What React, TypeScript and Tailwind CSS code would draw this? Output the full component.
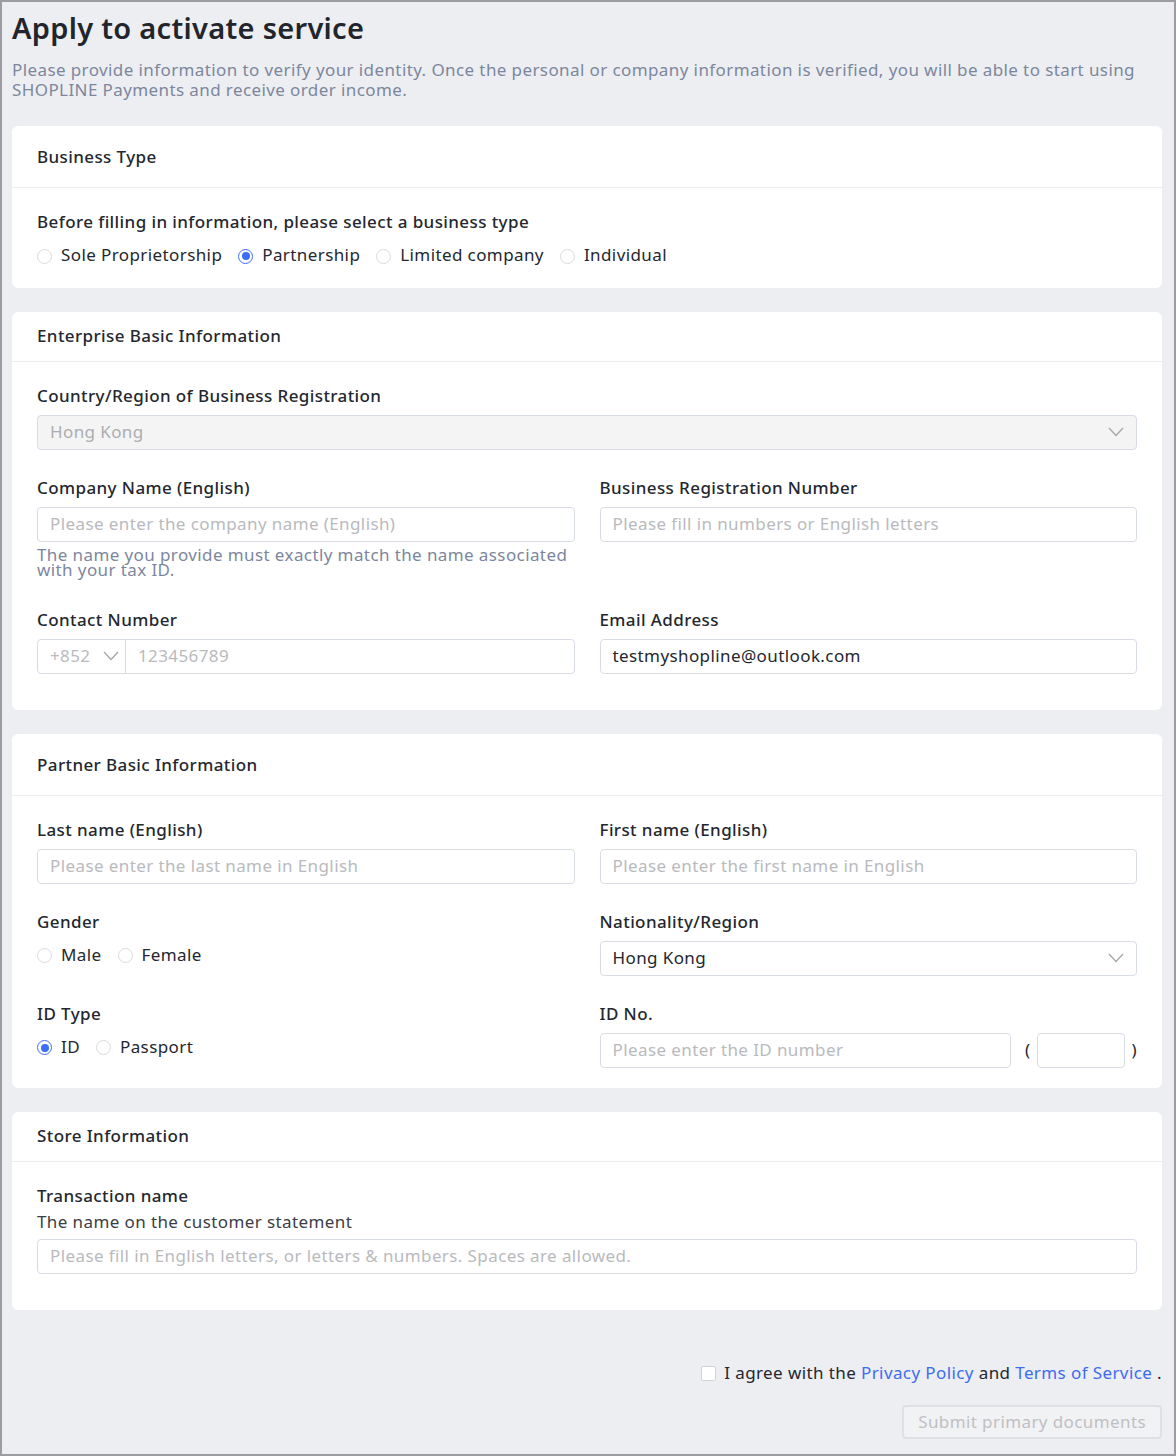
import React from "react";

const font = { fontFamily: '"Noto Sans", "Liberation Sans", Arial, sans-serif' };

function Radio({ checked, label }: { checked?: boolean; label: string }) {
  return (
    <label className="flex items-center gap-[9px] mr-[16px]">
      {checked ? (
        <span className="w-[15px] h-[15px] rounded-full border border-[#3d6cf6] flex items-center justify-center mt-[3px]">
          <span className="w-[8px] h-[8px] rounded-full bg-[#3d6cf6]" />
        </span>
      ) : (
        <span className="w-[15px] h-[15px] rounded-full border-[1.5px] border-[#dadada] mt-[3px]" />
      )}
      <span className="text-[17px] text-[#24272e]">{label}</span>
    </label>
  );
}

function Chevron() {
  return (
    <svg width="16" height="10" viewBox="0 0 16 10" className="text-[#a6a6a6]">
      <path d="M1 1 L8 8.5 L15 1" fill="none" stroke="currentColor" strokeWidth="1.3" />
    </svg>
  );
}

function Input({ placeholder, value, className = "" }: { placeholder?: string; value?: string; className?: string }) {
  return (
    <div className={`h-[35px] border border-[#d8dce6] rounded-[4px] bg-white flex items-center px-[12px] text-[17px] ${className}`}>
      {value ? <span className="text-[#24272e]">{value}</span> : <span className="text-[#b9babe]">{placeholder}</span>}
    </div>
  );
}

function Label({ children }: { children: React.ReactNode }) {
  return <div className="text-[17px] text-[#24272e] leading-[20px] mb-[9px] font-medium">{children}</div>;
}

function Card({ title, headerClass, children, bodyClass }: { title: string; headerClass: string; children: React.ReactNode; bodyClass: string }) {
  return (
    <div className="bg-white rounded-[6px]">
      <div className={`px-[25px] border-b border-[#ececef] flex items-center text-[17px] text-[#24272e] font-medium ${headerClass}`}>{title}</div>
      <div className={`px-[25px] ${bodyClass}`}>{children}</div>
    </div>
  );
}

export default function App() {
  return (
    <div style={font} className="min-h-[1456px] border-2 border-[#9c9ca1] bg-[#edeef2] pl-[10px] pr-[12px] pt-[8px] pb-[12px] tracking-[0.4px]">
      <h1 className="text-[29px] leading-[36px] font-semibold text-[#22252c] tracking-[0.3px]">Apply to activate service</h1>
      <p className="mt-[14px] text-[17px] leading-[20px] text-[#7c879d]">
        Please provide information to verify your identity. Once the personal or company information is verified, you will be able to start using SHOPLINE Payments and receive order income.
      </p>

      <div className="mt-[26px] flex flex-col gap-[24px]">
        <Card title="Business Type" headerClass="h-[62px] pt-[1px]" bodyClass="pt-[24px] pb-[20px]">
          <Label>Before filling in information, please select a business type</Label>
          <div className="flex items-center mt-[10px]">
            <Radio label="Sole Proprietorship" />
            <Radio label="Partnership" checked />
            <Radio label="Limited company" />
            <Radio label="Individual" />
          </div>
        </Card>

        <Card title="Enterprise Basic Information" headerClass="h-[50px]" bodyClass="pt-[24px] pb-[36px]">
          <Label>Country/Region of Business Registration</Label>
          <div className="h-[35px] border border-[#d8dce6] rounded-[4px] bg-[#f4f4f5] flex items-center justify-between px-[12px] text-[17px]">
            <span className="text-[#acadb1]">Hong Kong</span>
            <Chevron />
          </div>
          <div className="grid grid-cols-2 gap-x-[25px] mt-[28px]">
            <div>
              <Label>Company Name (English)</Label>
              <Input placeholder="Please enter the company name (English)" />
              <div className="mt-[5px] text-[17px] leading-[15px] text-[#7c879d]">
                The name you provide must exactly match the name associated with your tax ID.
              </div>
            </div>
            <div>
              <Label>Business Registration Number</Label>
              <Input placeholder="Please fill in numbers or English letters" />
            </div>
          </div>
          <div className="grid grid-cols-2 gap-x-[25px] mt-[33px]">
            <div>
              <Label>Contact Number</Label>
              <div className="h-[35px] border border-[#d8dce6] rounded-[4px] bg-white flex items-center text-[17px]">
                <div className="w-[88px] h-full border-r border-[#d8dce6] flex items-center justify-between pl-[12px] pr-[6px]">
                  <span className="text-[#b9babe]">+852</span>
                  <Chevron />
                </div>
                <span className="pl-[12px] text-[#b9babe]">123456789</span>
              </div>
            </div>
            <div>
              <Label>Email Address</Label>
              <Input value="testmyshopline@outlook.com" />
            </div>
          </div>
        </Card>

        <Card title="Partner Basic Information" headerClass="h-[62px] pt-[1px]" bodyClass="pt-[24px] pb-[20px]">
          <div className="grid grid-cols-2 gap-x-[25px]">
            <div>
              <Label>Last name (English)</Label>
              <Input placeholder="Please enter the last name in English" />
            </div>
            <div>
              <Label>First name (English)</Label>
              <Input placeholder="Please enter the first name in English" />
            </div>
          </div>
          <div className="grid grid-cols-2 gap-x-[25px] mt-[28px]">
            <div>
              <Label>Gender</Label>
              <div className="flex items-center mt-[10px]">
                <Radio label="Male" />
                <Radio label="Female" />
              </div>
            </div>
            <div>
              <Label>Nationality/Region</Label>
              <div className="h-[35px] border border-[#d8dce6] rounded-[4px] bg-white flex items-center justify-between px-[12px] text-[17px]">
                <span className="text-[#24272e]">Hong Kong</span>
                <Chevron />
              </div>
            </div>
          </div>
          <div className="grid grid-cols-2 gap-x-[25px] mt-[28px]">
            <div>
              <Label>ID Type</Label>
              <div className="flex items-center mt-[10px]">
                <Radio label="ID" checked />
                <Radio label="Passport" />
              </div>
            </div>
            <div>
              <Label>ID No.</Label>
              <div className="flex items-center">
                <Input placeholder="Please enter the ID number" className="w-[412px]" />
                <span className="ml-[14px] text-[17px] text-[#24272e]">(</span>
                <div className="ml-[6px] w-[88px] h-[35px] border border-[#d8dce6] rounded-[4px] bg-white" />
                <span className="ml-[7px] text-[17px] text-[#24272e]">)</span>
              </div>
            </div>
          </div>
        </Card>

        <Card title="Store Information" headerClass="h-[50px]" bodyClass="pt-[24px] pb-[36px]">
          <div className="text-[17px] text-[#24272e] leading-[20px] font-medium">Transaction name</div>
          <div className="text-[17px] text-[#3b3e45] leading-[20px] mt-[6px] mb-[7px]">The name on the customer statement</div>
          <Input placeholder="Please fill in English letters, or letters & numbers. Spaces are allowed." />
        </Card>
      </div>

      <div className="mt-[50px] flex items-center justify-end">
        <span className="w-[15px] h-[15px] border border-[#d3d3d6] rounded-[2px] bg-white mr-[8px] mt-[2px]" />
        <span className="text-[17px] text-[#24272e]">
          I agree with the <span className="text-[#3d6cf0]">Privacy Policy</span> and <span className="text-[#3d6cf0]">Terms of Service</span> .
        </span>
      </div>
      <div className="mt-[20px] flex justify-end">
        <div className="h-[34px] px-[14px] border-2 border-[#dfe0e3] rounded-[4px] bg-[#f1f2f4] flex items-center text-[17px] text-[#bfc0c4]">
          Submit primary documents
        </div>
      </div>
    </div>
  );
}
